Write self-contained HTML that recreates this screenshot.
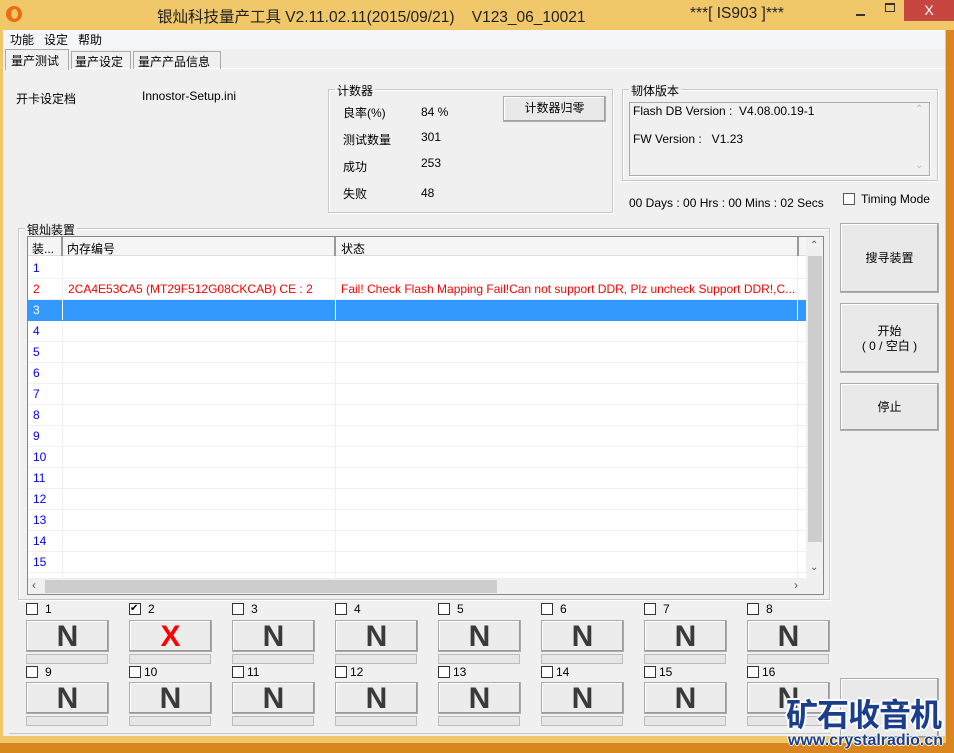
<!DOCTYPE html>
<html><head><meta charset="utf-8"><style>
*{box-sizing:border-box;margin:0;padding:0}
body{width:954px;height:753px;overflow:hidden;background:#d9861e;font-family:"Liberation Sans","Noto Sans CJK SC",sans-serif;font-size:12px;color:#000;position:relative}
.a{position:absolute}
.win{left:0;top:0;width:946px;height:743px;background:#f0c86a}
.client{left:3px;top:30px;width:942px;height:706px;background:#f0f0f0}
.grp{position:absolute;border:1px solid #c8c8c8;box-shadow:inset 1px 1px 0 #fff,1px 1px 0 #fff}
.grp>.lg{position:absolute;top:-8px;left:6px;background:#f0f0f0;padding:0 2px;font-size:12px}
.btn{position:absolute;background:#e9e9e9;border:1px solid #adadad;box-shadow:inset -1px -1px 0 #a0a0a0,inset 1px 1px 0 #fff;text-align:center}
.cb{position:absolute;width:12px;height:12px;border:1px solid #333;background:#fff}
.nb{position:absolute;width:83px;height:32px;background:#ececec;border:1px solid #aaa;box-shadow:inset -1px -1px 0 #999,inset 1px 1px 0 #fff;font:bold 30px "Liberation Sans Narrow","Liberation Sans",sans-serif;color:#3a3a3a;text-align:center;line-height:31px}
.pb{position:absolute;width:82px;height:10px;border:1px solid #bcbcbc;background:#e6e6e6}
.sl{position:absolute;font-size:12px}
.row{position:absolute;left:28px;width:778px;height:21px;border-bottom:1px solid #f0f0f0;font-size:12px;line-height:20px;color:#0000ff}
.row span{position:absolute;left:5px}
</style></head><body>
<div class="a win"></div>
<div class="a" style="left:946px;top:0;width:8px;height:30px;background:#f0c86a"></div>
<div class="a" style="left:6px;top:6px;width:16px;height:16px;border-radius:50%;background:#f06a10"></div>
<div class="a" style="left:11px;top:9px;width:7px;height:10px;border-radius:50%;background:#f0c86a"></div>
<div class="a" style="left:157px;top:5px;font-size:15.5px;color:#222">银灿科技量产工具 V2.11.02.11(2015/09/21)&nbsp;&nbsp;&nbsp; V123_06_10021</div>
<div class="a" style="left:690px;top:5px;font-size:15.5px;color:#222">***[ IS903 ]***</div>
<div class="a" style="left:856px;top:14px;width:9px;height:2px;background:#333"></div>
<div class="a" style="left:885px;top:3px;width:10px;height:9px;border:1px solid #333;border-top-width:2px"></div>
<div class="a" style="left:904px;top:0;width:50px;height:21px;background:#c7463f;color:#fff;text-align:center;font-size:14px;line-height:20px">X</div>
<div class="a client"></div>
<div class="a" style="left:3px;top:30px;width:942px;height:19px;background:#f5f6f7"></div>
<div class="a" style="left:10px;top:31px;font-size:12px">功能&nbsp;&nbsp; 设定&nbsp;&nbsp; 帮助</div>
<div class="a" style="left:3px;top:68px;width:942px;height:1px;background:#fff"></div>
<div class="a" style="left:5px;top:49px;width:64px;height:21px;background:#f0f0f0;border:1px solid #aaa;border-bottom:none;padding:2px 0 0 5px">量产测试</div>
<div class="a" style="left:71px;top:51px;width:60px;height:18px;border:1px solid #aaa;border-bottom:none;padding:1px 0 0 3px">量产设定</div>
<div class="a" style="left:133px;top:51px;width:88px;height:18px;border:1px solid #aaa;border-bottom:none;padding:1px 0 0 4px">量产产品信息</div>

<div class="a" style="left:16px;top:90px">开卡设定档</div>
<div class="a" style="left:142px;top:89px">Innostor-Setup.ini</div>

<div class="grp" style="left:328px;top:89px;width:285px;height:124px"><span class="lg">计数器</span></div>
<div class="a" style="left:343px;top:104px">良率(%)</div><div class="a" style="left:421px;top:105px">84 %</div>
<div class="a" style="left:343px;top:131px">测试数量</div><div class="a" style="left:421px;top:130px">301</div>
<div class="a" style="left:343px;top:158px">成功</div><div class="a" style="left:421px;top:156px">253</div>
<div class="a" style="left:343px;top:185px">失败</div><div class="a" style="left:421px;top:186px">48</div>
<div class="btn" style="left:503px;top:96px;width:103px;height:26px;line-height:23px">计数器归零</div>

<div class="grp" style="left:622px;top:89px;width:316px;height:92px"><span class="lg">韧体版本</span></div>
<div class="a" style="left:629px;top:102px;width:301px;height:74px;border:1px solid #aaa;box-shadow:1px 1px 0 #fff"></div>
<div class="a" style="left:633px;top:104px">Flash DB Version :&nbsp; V4.08.00.19-1</div>
<div class="a" style="left:633px;top:132px">FW Version :&nbsp;&nbsp; V1.23</div>
<div class="a" style="left:915px;top:104px;color:#bbb;font-size:10px">⌃</div>
<div class="a" style="left:915px;top:160px;color:#bbb;font-size:10px">⌄</div>
<div class="a" style="left:629px;top:196px">00 Days : 00 Hrs : 00 Mins : 02 Secs</div>
<div class="cb" style="left:843px;top:193px;border-color:#555"></div>
<div class="a" style="left:861px;top:192px">Timing Mode</div>

<div class="grp" style="left:18px;top:228px;width:812px;height:372px"><span class="lg">银灿装置</span></div>
<div class="a" style="left:27px;top:236px;width:797px;height:359px;background:#fff;border:1px solid #828790"></div>
<div class="a" style="left:28px;top:237px;width:778px;height:19px;background:#f5f5f5;border-bottom:1px solid #ddd"></div>
<div class="a" style="left:32px;top:240px">装...</div>
<div class="a" style="left:61px;top:237px;width:2px;height:19px;background:#999"></div>
<div class="a" style="left:67px;top:240px">内存编号</div>
<div class="a" style="left:334px;top:237px;width:2px;height:19px;background:#999"></div>
<div class="a" style="left:341px;top:240px">状态</div>
<div class="a" style="left:797px;top:237px;width:2px;height:19px;background:#999"></div>
<div class="a" style="left:62px;top:257px;width:1px;height:321px;background:#f0f0f0"></div>
<div class="a" style="left:335px;top:257px;width:1px;height:321px;background:#f0f0f0"></div>
<div class="a" style="left:797px;top:257px;width:1px;height:321px;background:#f0f0f0"></div>
<div class="row" style="top:258px"><span>1</span></div>
<div class="row" style="top:279px;color:#f00"><span>2</span><span style="left:40px">2CA4E53CA5 (MT29F512G08CKCAB) CE : 2</span><span style="left:313px">Fail! Check Flash Mapping Fail!Can not support DDR, Plz uncheck Support DDR!,C...</span></div>
<div class="row" style="top:300px;background:#3399ff;color:#fff;border-bottom:none"><span>3</span></div>
<div class="a" style="left:62px;top:300px;width:1px;height:20px;background:#fff"></div>
<div class="a" style="left:335px;top:300px;width:1px;height:20px;background:#fff"></div>
<div class="a" style="left:797px;top:300px;width:1px;height:20px;background:#fff"></div>
<div class="row" style="top:321px"><span>4</span></div>
<div class="row" style="top:342px"><span>5</span></div>
<div class="row" style="top:363px"><span>6</span></div>
<div class="row" style="top:384px"><span>7</span></div>
<div class="row" style="top:405px"><span>8</span></div>
<div class="row" style="top:426px"><span>9</span></div>
<div class="row" style="top:447px"><span>10</span></div>
<div class="row" style="top:468px"><span>11</span></div>
<div class="row" style="top:489px"><span>12</span></div>
<div class="row" style="top:510px"><span>13</span></div>
<div class="row" style="top:531px"><span>14</span></div>
<div class="row" style="top:552px"><span>15</span></div>
<div class="a" style="left:806px;top:237px;width:17px;height:341px;background:#f0f0f0"></div>
<div class="a" style="left:808px;top:256px;width:14px;height:286px;background:#cdcdcd"></div>
<div class="a" style="left:810px;top:240px;font-size:10px;color:#555">⌃</div>
<div class="a" style="left:810px;top:562px;font-size:10px;color:#555">⌄</div>
<div class="a" style="left:28px;top:578px;width:795px;height:16px;background:#f0f0f0"></div>
<div class="a" style="left:45px;top:580px;width:452px;height:13px;background:#cdcdcd"></div>
<div class="a" style="left:32px;top:578px;font-size:12px;color:#555">‹</div>
<div class="a" style="left:794px;top:578px;font-size:12px;color:#555">›</div>

<div class="btn" style="left:840px;top:223px;width:99px;height:70px;line-height:68px">搜寻装置</div>
<div class="btn" style="left:840px;top:303px;width:99px;height:70px;padding-top:20px;line-height:15px">开始<br>( 0 / 空白 )</div>
<div class="btn" style="left:840px;top:383px;width:99px;height:48px;line-height:46px">停止</div>
<div class="btn" style="left:840px;top:678px;width:99px;height:60px"></div>

<div class="cb" style="left:26px;top:603px"></div><div class="sl" style="left:45px;top:602px">1</div>
<div class="cb" style="left:129px;top:603px;font-size:10px;line-height:10px">✔</div><div class="sl" style="left:148px;top:602px">2</div>
<div class="cb" style="left:232px;top:603px"></div><div class="sl" style="left:251px;top:602px">3</div>
<div class="cb" style="left:335px;top:603px"></div><div class="sl" style="left:354px;top:602px">4</div>
<div class="cb" style="left:438px;top:603px"></div><div class="sl" style="left:457px;top:602px">5</div>
<div class="cb" style="left:541px;top:603px"></div><div class="sl" style="left:560px;top:602px">6</div>
<div class="cb" style="left:644px;top:603px"></div><div class="sl" style="left:663px;top:602px">7</div>
<div class="cb" style="left:747px;top:603px"></div><div class="sl" style="left:766px;top:602px">8</div>
<div class="nb" style="left:26px;top:620px">N</div>
<div class="nb" style="left:129px;top:620px;color:#f00">X</div>
<div class="nb" style="left:232px;top:620px">N</div>
<div class="nb" style="left:335px;top:620px">N</div>
<div class="nb" style="left:438px;top:620px">N</div>
<div class="nb" style="left:541px;top:620px">N</div>
<div class="nb" style="left:644px;top:620px">N</div>
<div class="nb" style="left:747px;top:620px">N</div>
<div class="pb" style="left:26px;top:654px"></div><div class="pb" style="left:129px;top:654px"></div><div class="pb" style="left:232px;top:654px"></div><div class="pb" style="left:335px;top:654px"></div><div class="pb" style="left:438px;top:654px"></div><div class="pb" style="left:541px;top:654px"></div><div class="pb" style="left:644px;top:654px"></div><div class="pb" style="left:747px;top:654px"></div>
<div class="cb" style="left:26px;top:666px"></div><div class="sl" style="left:45px;top:665px">9</div>
<div class="cb" style="left:129px;top:666px"></div><div class="sl" style="left:144px;top:665px">10</div>
<div class="cb" style="left:232px;top:666px"></div><div class="sl" style="left:247px;top:665px">11</div>
<div class="cb" style="left:335px;top:666px"></div><div class="sl" style="left:350px;top:665px">12</div>
<div class="cb" style="left:438px;top:666px"></div><div class="sl" style="left:453px;top:665px">13</div>
<div class="cb" style="left:541px;top:666px"></div><div class="sl" style="left:556px;top:665px">14</div>
<div class="cb" style="left:644px;top:666px"></div><div class="sl" style="left:659px;top:665px">15</div>
<div class="cb" style="left:747px;top:666px"></div><div class="sl" style="left:762px;top:665px">16</div>
<div class="nb" style="left:26px;top:682px">N</div><div class="nb" style="left:129px;top:682px">N</div><div class="nb" style="left:232px;top:682px">N</div><div class="nb" style="left:335px;top:682px">N</div><div class="nb" style="left:438px;top:682px">N</div><div class="nb" style="left:541px;top:682px">N</div><div class="nb" style="left:644px;top:682px">N</div><div class="nb" style="left:747px;top:682px">N</div>
<div class="pb" style="left:26px;top:716px"></div><div class="pb" style="left:129px;top:716px"></div><div class="pb" style="left:232px;top:716px"></div><div class="pb" style="left:335px;top:716px"></div><div class="pb" style="left:438px;top:716px"></div><div class="pb" style="left:541px;top:716px"></div><div class="pb" style="left:644px;top:716px"></div><div class="pb" style="left:747px;top:716px"></div>
<div class="a" style="left:9px;top:733px;width:822px;height:1px;background:#c8c8c8"></div>

<div class="a" style="left:786px;top:690px;font:bold 32px 'Noto Sans CJK SC',sans-serif;color:#1a3d8c;letter-spacing:-1px;text-shadow:-2px 0 #fff,2px 0 #fff,0 -2px #fff,0 2px #fff">矿石收音机</div>
<div class="a" style="left:788px;top:732px;font:bold 16px 'Liberation Sans',sans-serif;color:#1a3d8c;text-shadow:-1px 0 #fff,1px 0 #fff,0 -1px #fff,0 1px #fff">www.crystalradio.cn</div>
</body></html>
